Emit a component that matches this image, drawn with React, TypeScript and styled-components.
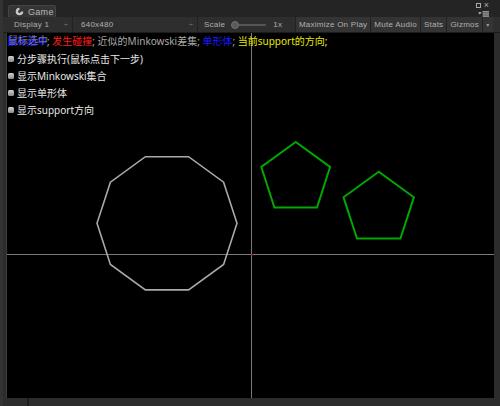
import React from 'react';
import styled, { createGlobalStyle } from 'styled-components';

const GlobalStyle = createGlobalStyle`
  html, body {
    margin: 0;
    padding: 0;
    background: #282828;
  }
`;

type Pt = [number, number];

const polygon = (cx: number, cy: number, r: number, n: number, start: number): string => {
  const pts: Pt[] = [];
  for (let i = 0; i < n; i++) {
    const a = start + (i * 2 * Math.PI) / n;
    pts.push([cx + r * Math.cos(a), cy - r * Math.sin(a)]);
  }
  return pts.map(p => p[0].toFixed(1) + ',' + p[1].toFixed(1)).join(' ');
};

// viewport origin in page coords is (6, 32)
const OX = 6;
const OY = 32;

const legend = [
  { text: '发生碰撞', color: '#ff1a1a' },
  { text: '近似的Minkowski差集', color: '#a8a8a8' },
  { text: '单形体', color: '#1a1aff' },
  { text: '当前support的方向', color: '#e8e800' },
];

const toggles = ['分步骤执行(鼠标点击下一步)', '显示Minkowski集合', '显示单形体', '显示support方向'];

const App: React.FC = () => {
  return (
    <>
      <GlobalStyle />
      <Window>
        <TabStrip>
          <Tab>
            <svg width="9" height="9" viewBox="0 0 10 10">
              <path d="M5 0.8 A4.2 4.2 0 1 0 9.2 5 L5 5 Z" fill="#c8c8c8" />
              <circle cx="5" cy="5" r="1.6" fill="#383838" />
            </svg>
            <span>Game</span>
          </Tab>
          <WinControls>
            <CtrlRow>
              <MiniSquare />
              <CloseX>×</CloseX>
            </CtrlRow>
            <CtrlRow>
              <svg width="11" height="6" viewBox="0 0 12 6">
                <path d="M0 1 L4 1 L2 3.5 Z" fill="#bbb" />
                <rect x="5" y="0" width="7" height="1.3" fill="#bbb" />
                <rect x="5" y="2.3" width="7" height="1.3" fill="#bbb" />
                <rect x="5" y="4.6" width="7" height="1.3" fill="#bbb" />
              </svg>
            </CtrlRow>
          </WinControls>
        </TabStrip>
        <Toolbar>
          <Dropdown $w={65}>
            <span>Display 1</span>
            <Arrows>÷</Arrows>
          </Dropdown>
          <Dropdown $w={123}>
            <span>640x480</span>
            <Arrows>÷</Arrows>
          </Dropdown>
          <ScaleGroup>
            <span>Scale</span>
            <Slider>
              <Knob />
            </Slider>
            <span>1x</span>
          </ScaleGroup>
          <Spacer />
          <ToolButton>Maximize On Play</ToolButton>
          <ToolButton>Mute Audio</ToolButton>
          <ToolButton>Stats</ToolButton>
          <ToolButton>Gizmos</ToolButton>
          <DropButton>▾</DropButton>
        </Toolbar>
        <ViewArea>
          <Viewport>
            <Canvas width="488" height="366" viewBox="0 0 488 366">
              <line x1="0" y1={253.5 - OY} x2="488" y2={253.5 - OY} stroke="#7a7a7a" strokeWidth="1" />
              <line x1={250.5 - OX} y1="0" x2={250.5 - OX} y2="366" stroke="#7a7a7a" strokeWidth="1" />
              <rect x={250 - OX} y={253 - OY} width="1.5" height="1.5" fill="#e00" />
              <polygon
                points={polygon(166 - OX, 222.3 - OY, 70, 10, 0)}
                fill="none"
                stroke="#a9a9a9"
                strokeWidth="1.6"
              />
              <polygon
                points={polygon(294.7 - OX, 177.2 - OY, 36.2, 5, Math.PI / 2)}
                fill="none"
                stroke="#00a800"
                strokeWidth="2"
              />
              <polygon
                points={polygon(377.7 - OX, 207.7 - OY, 37, 5, Math.PI / 2)}
                fill="none"
                stroke="#00a800"
                strokeWidth="2"
              />
            </Canvas>
            <Overlay>
              <LegendLine>
                <Ghosted>
                  <Word $color="#1a1aff">鼠标选中</Word>
                  <GhostText>鼠标选中</GhostText>
                </Ghosted>
                <Sep>; </Sep>
                {legend.map((l, i) => (
                  <React.Fragment key={i}>
                    <Word $color={l.color}>{l.text}</Word>
                    <Sep $color={l.color === '#e8e800' ? '#e8e800' : undefined}>; </Sep>
                  </React.Fragment>
                ))}
              </LegendLine>
              <ToggleList>
                {toggles.map(t => (
                  <ToggleRow key={t}>
                    <Check />
                    <span>{t}</span>
                  </ToggleRow>
                ))}
              </ToggleList>
            </Overlay>
          </Viewport>
        </ViewArea>
        <BottomStrip>
          <BottomMark />
        </BottomStrip>
      </Window>
    </>
  );
};

const Window = styled.div`
  width: 500px;
  height: 406px;
  display: flex;
  flex-direction: column;
  background: #282828;
  border-left: 3px solid #333;
  box-sizing: border-box;
  overflow: hidden;
  font-family: 'Liberation Sans', 'DejaVu Sans', sans-serif;
`;

const TabStrip = styled.div`
  height: 17px;
  display: flex;
  align-items: flex-end;
  padding-left: 5px;
  background: #242424;
  position: relative;
`;

const Tab = styled.div`
  width: 48px;
  height: 12px;
  display: flex;
  align-items: center;
  gap: 4px;
  padding-left: 6px;
  box-sizing: border-box;
  background: #353535;
  border: 1px solid #444;
  border-bottom: none;
  border-radius: 2px 2px 0 0;
  color: #b8b8b8;
  font-size: 9px;
  letter-spacing: 0.3px;
`;

const WinControls = styled.div`
  margin-left: auto;
  margin-right: 11px;
  display: flex;
  flex-direction: column;
  align-items: flex-end;
  gap: 1px;
  align-self: flex-start;
  padding-top: 2px;
`;

const CtrlRow = styled.div`
  display: flex;
  align-items: center;
  gap: 3px;
  height: 7px;
`;

const MiniSquare = styled.div`
  width: 3px;
  height: 3px;
  border: 1px solid #aaa;
`;

const CloseX = styled.span`
  color: #aaa;
  font-size: 9px;
  line-height: 7px;
`;

const Toolbar = styled.div`
  height: 15px;
  display: flex;
  align-items: stretch;
  background: #2e2e2e;
  border-bottom: 1px solid #1c1c1c;
  padding-left: 5px;
  padding-right: 7px;
  color: #b0b0b0;
  font-size: 8px;
  letter-spacing: 0.25px;
`;

const Dropdown = styled.div<{ $w: number }>`
  width: ${p => p.$w}px;
  display: flex;
  align-items: center;
  justify-content: space-between;
  padding: 0 4px 0 6px;
  box-sizing: border-box;
  border-right: 1px solid #222;
  margin-right: 2px;
`;

const Arrows = styled.span`
  color: #888;
  font-size: 7px;
`;

const ScaleGroup = styled.div`
  display: flex;
  align-items: center;
  gap: 4px;
  padding-left: 4px;
`;

const Slider = styled.div`
  width: 34px;
  height: 2px;
  background: #555;
  border-radius: 1px;
  position: relative;
  margin: 0 3px 0 3px;
`;

const Knob = styled.div`
  position: absolute;
  left: -1px;
  top: -3px;
  width: 8px;
  height: 8px;
  border-radius: 50%;
  background: #5a5a5a;
  border: 1px solid #707070;
  box-sizing: border-box;
`;

const Spacer = styled.div`
  flex: 1;
`;

const ToolButton = styled.div`
  display: flex;
  align-items: center;
  padding: 0 3px;
  border-left: 1px solid #222;
  background: #343434;
  white-space: nowrap;
`;

const DropButton = styled(ToolButton)`
  width: 11px;
  justify-content: center;
  box-sizing: border-box;
  padding: 0;
  font-size: 6px;
  color: #999;
`;

const ViewArea = styled.div`
  flex: 1;
  display: flex;
  padding: 0 6px 8px 3px;
  background: #2c2c2c;
`;

const Viewport = styled.div`
  flex: 1;
  background: #000;
  position: relative;
  border-left: 1px solid #3c3c3c;
  overflow: hidden;
`;

const Canvas = styled.svg`
  position: absolute;
  left: 0;
  top: 0;
`;

const Overlay = styled.div`
  position: relative;
  display: flex;
  flex-direction: column;
  padding: 2px 0 0 0;
  font-family: 'Noto Sans', 'Noto Sans CJK SC', sans-serif;
  font-size: 10px;
`;

const LegendLine = styled.div`
  display: flex;
  white-space: pre;
  line-height: 13px;
  color: #a8a8a8;
`;

const Ghosted = styled.span`
  position: relative;
`;

const GhostText = styled.span`
  position: absolute;
  left: 1px;
  top: -1px;
  color: #ffffff;
  opacity: 0.45;
`;

const Word = styled.span<{ $color: string }>`
  color: ${p => p.$color};
`;

const Sep = styled.span<{ $color?: string }>`
  color: ${p => p.$color || '#a8a8a8'};
`;

const ToggleList = styled.div`
  display: flex;
  flex-direction: column;
  padding: 2px 0 0 1px;
`;

const ToggleRow = styled.div`
  height: 17px;
  display: flex;
  align-items: center;
  gap: 3px;
  color: #e8e8e8;
`;

const Check = styled.div`
  width: 6px;
  height: 6px;
  border-radius: 1.5px;
  background: linear-gradient(#d0d0d0, #8a8a8a);
`;

const BottomStrip = styled.div`
  height: 0;
  position: relative;
`;

const BottomMark = styled.div`
  position: absolute;
  left: 24px;
  top: -8px;
  width: 2px;
  height: 8px;
  background: #1c1c1c;
`;

export default App;
